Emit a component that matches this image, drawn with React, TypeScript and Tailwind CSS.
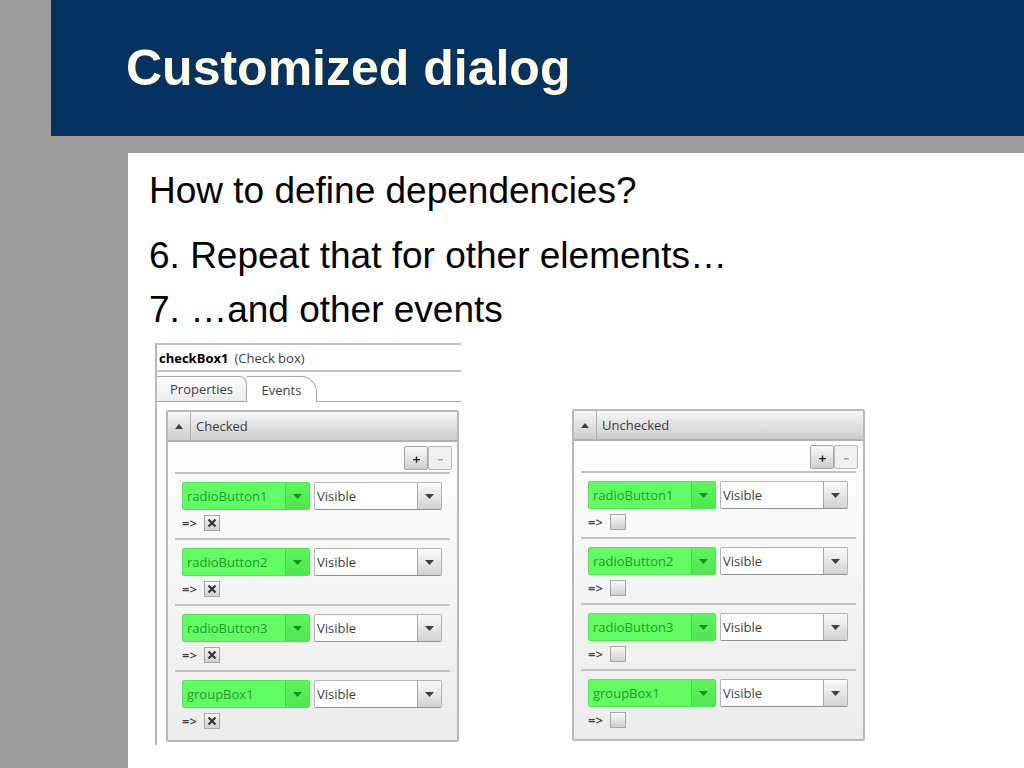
import { useState } from "react";

interface EventPanelProps {
  title: string;
  checked: boolean;
}

interface ComboProps {
  label: string;
  options: string[];
  initial: string;
  highlighted?: boolean;
}

const ELEMENTS = ["radioButton1", "radioButton2", "radioButton3", "groupBox1"];
const ATTRIBUTES = ["Visible", "Enabled"];

function Combo({ label, options, initial, highlighted }: ComboProps) {
  const [value, setValue] = useState(initial);

  return (
    <div className="relative h-7 flex-1">
      <select
        aria-label={label}
        value={value}
        onChange={(e) => setValue(e.target.value)}
        className={
          highlighted
            ? "block h-full w-full appearance-none rounded-xs border border-[#4fe650] bg-[#62fc63] pl-1 pr-6 text-[#249a2c]"
            : "block h-full w-full appearance-none rounded-xs border border-[#b4b4b4] border-b-[#8f8f8f] bg-white pl-0.5 pr-6 text-[#3c3c44]"
        }
      >
        {options.map((option) => (
          <option key={option}>{option}</option>
        ))}
      </select>
      <span
        className={
          highlighted
            ? "pointer-events-none absolute inset-y-px right-px flex w-6 items-center justify-center border-l border-[#45d846] bg-linear-to-b from-[#5df65e] to-[#4fe650] text-[#1d8a24]"
            : "pointer-events-none absolute inset-y-px right-px flex w-6 items-center justify-center border-l border-[#a8a8a8] bg-linear-to-b from-[#fbfbfb] to-[#d2d2d2] text-[#404040]"
        }
      >
        <svg width="9" height="5" viewBox="0 0 9 5" fill="currentColor">
          <path d="M0 0h9L4.500 5z" />
        </svg>
      </span>
    </div>
  );
}

function ActionRow({ element, id, initial }: { element: string; id: string; initial: boolean }) {
  const [on, setOn] = useState(initial);

  return (
    <li className="h-[66px] border-t-2 border-[#c2c2c2] pl-[7px] pr-2 pt-2">
      <div className="flex gap-1">
        <Combo label="Element" options={ELEMENTS} initial={element} highlighted />
        <Combo label="Attribute" options={ATTRIBUTES} initial="Visible" />
      </div>
      <div className="flex items-center gap-1 pt-[3px]">
        <label htmlFor={id} className="w-[18px] font-semibold leading-5">
          =&gt;
        </label>
        <span className="grid size-4 place-items-center">
          <input
            id={id}
            type="checkbox"
            checked={on}
            onChange={(e) => setOn(e.target.checked)}
            className="col-start-1 row-start-1 size-4 appearance-none border border-[#a6a6a6] bg-linear-to-b from-[#f8f8f8] to-[#d0d0d0]"
          />
          {on && (
            <svg
              className="pointer-events-none col-start-1 row-start-1"
              width="8"
              height="8"
              viewBox="0 0 8 8"
              stroke="#333333"
              strokeWidth="2.2"
            >
              <path d="M0.500 0.500L7.500 7.500M7.500 0.500L0.500 7.500" />
            </svg>
          )}
        </span>
      </div>
    </li>
  );
}

function EventPanel({ title, checked }: EventPanelProps) {
  return (
    <section className="w-[293px] rounded-xs border-2 border-[#b8b8b8] bg-linear-to-b from-white to-[#ececec]">
      <header className="flex h-[30px] items-stretch border-b-2 border-[#b0b0b0] bg-linear-to-b from-[#f6f6f6] to-[#cdcdcd]">
        <button
          type="button"
          aria-label="Collapse"
          className="flex w-[23px] items-center justify-center border-r border-[#b0b0b0] text-[#404040]"
        >
          <svg width="8" height="5" viewBox="0 0 8 5" fill="currentColor">
            <path d="M0 5h8L4 0z" />
          </svg>
        </button>
        <h3 className="self-center pl-[5px]">{title}</h3>
      </header>
      <div className="flex h-[30px] items-center justify-end px-[5px] pt-px">
        <button
          type="button"
          aria-label="Add"
          className="flex h-6 w-6 items-center justify-center rounded-xs border border-[#a6a6a6] bg-linear-to-b from-[#fafafa] to-[#cfcfcf] pt-1 text-[#222222]"
        >
          <svg width="7" height="7" viewBox="0 0 7 7" fill="currentColor">
            <path d="M0 3h2.800V0.500h1.400V3H7v1.300H4.200V6.800H2.800V4.300H0z" />
          </svg>
        </button>
        <button
          type="button"
          aria-label="Remove"
          className="flex h-6 w-6 items-center justify-center rounded-xs border border-[#b9b9b9] bg-[#f0f0f0] pt-1 text-[#a3a3a3]"
        >
          <svg width="5" height="2" viewBox="0 0 5 2" fill="currentColor">
            <path d="M0 0h5v1.500H0z" />
          </svg>
        </button>
      </div>
      <ul className="px-[7px] pb-1">
        {ELEMENTS.map((element) => (
          <ActionRow key={element} element={element} id={`${title}-${element}`} initial={checked} />
        ))}
      </ul>
    </section>
  );
}

function PropertyEditor() {
  return (
    <div className="w-[306px] border-l-2 border-[#b8b8b8]">
      <div className="flex h-[29px] items-center gap-[6px] border-y-2 border-[#c2c2c2] pl-0.5 text-[#3c3c44]">
        <strong className="font-bold text-black">checkBox1</strong>
        <span>(Check box)</span>
      </div>
      <div className="mt-1 flex h-[26px]" role="tablist">
        <button
          type="button"
          role="tab"
          aria-selected="false"
          className="w-[90px] rounded-tr-lg border-t border-r border-b border-[#a6a6a6] bg-linear-to-b from-white to-[#ebebeb]"
        >
          Properties
        </button>
        <button
          type="button"
          role="tab"
          aria-selected="true"
          className="w-[70px] rounded-tr-2xl border-t border-r border-[#a6a6a6] bg-white"
        >
          Events
        </button>
        <div className="flex-1 border-b border-[#a6a6a6]" />
      </div>
      <div className="px-[9px] pt-2 pb-[3px]">
        <EventPanel title="Checked" checked />
      </div>
    </div>
  );
}

export default function App() {
  return (
    <div className="flex min-h-screen flex-col bg-[#9c9c9c] font-['Liberation_Sans',Arial,sans-serif]">
      <header className="ml-[51px] flex h-[136px] items-center bg-[#043362] pl-[75px]">
        <h1 className="text-[50px] font-bold leading-[52px] text-[#fffbe6]">Customized dialog</h1>
      </header>
      <main className="mt-[17px] ml-32 flex-1 bg-white pt-[14px] pl-[21px] text-black">
        <h2 className="text-[37px] leading-[48px]">How to define dependencies?</h2>
        <ol className="mt-[14px] text-[37px] leading-[54px]">
          <li>6. Repeat that for other elements…</li>
          <li>7. …and other events</li>
        </ol>
        <div className="mt-[6px] flex items-end gap-[111px] pl-[6px] font-['Open_Sans','Noto_Sans',sans-serif] text-[13px] leading-5 text-[#3c3c44]">
          <PropertyEditor />
          <div className="pb-1">
            <EventPanel title="Unchecked" checked={false} />
          </div>
        </div>
      </main>
    </div>
  );
}
